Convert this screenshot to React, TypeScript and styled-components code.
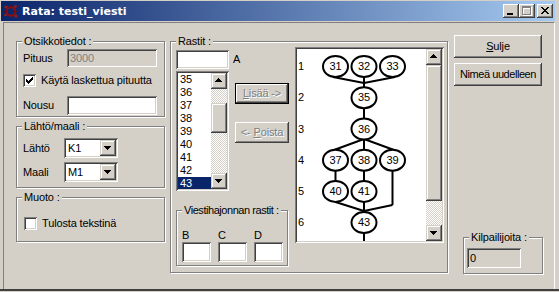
import React from 'react';
import styled, { createGlobalStyle, css } from 'styled-components';

const FACE = '#D4D0C8';
const SHADOW = '#808080';
const DARK = '#404040';
const NAVY = '#0A246A';

const GlobalStyle = createGlobalStyle`
  html, body {
    margin: 0;
    padding: 0;
    background: ${FACE};
    overflow: hidden;
  }
  body {
    font-family: "Liberation Sans", Arial, sans-serif;
    font-size: 11px;
    line-height: 13px;
    letter-spacing: -0.15px;
    color: #000;
  }
`;

// classic 3d edges
const raised = css`
  background: ${FACE};
  box-shadow: inset -1px -1px ${DARK}, inset 1px 1px #fff, inset -2px -2px ${SHADOW}, inset 2px 2px ${FACE};
`;
const raisedSmall = css`
  background: ${FACE};
  box-shadow: inset -1px -1px ${DARK}, inset 1px 1px ${FACE}, inset -2px -2px ${SHADOW}, inset 2px 2px #fff;
`;
const sunken = css`
  box-shadow: inset 1px 1px ${SHADOW}, inset -1px -1px #fff, inset 2px 2px ${DARK}, inset -2px -2px ${FACE};
`;
const dither = css`
  background: repeating-conic-gradient(#fff 0 25%, ${FACE} 0 50%) 0 0 / 2px 2px;
`;

const Window = styled.div`
  width: 559px;
  height: 292px;
  box-sizing: border-box;
  padding: 1px 4px 3px 1px;
  background: ${FACE};
  box-shadow: inset 0 -1px ${FACE}, inset 0 -3px ${DARK};
  display: flex;
  flex-direction: column;
`;

const TitleBar = styled.div`
  height: 20px;
  flex: none;
  display: flex;
  align-items: center;
  padding: 0 2px;
  background: linear-gradient(to right, ${NAVY}, #a6caf0);
`;

const TitleText = styled.span`
  flex: 1;
  margin-left: 3px;
  color: #fff;
  font-family: "DejaVu Sans", Verdana, sans-serif;
  font-weight: bold;
  font-size: 11px;
  letter-spacing: 0;
  white-space: nowrap;
`;

const CapButton = styled.div<{ $gap?: number }>`
  width: 16px;
  height: 14px;
  margin-left: ${p => p.$gap ?? 0}px;
  ${raised}
  svg {
    display: block;
  }
`;

const Client = styled.div`
  flex: 1;
  margin: 1px 0 0 2px;
  border-top: 1px solid ${SHADOW};
  border-left: 1px solid ${SHADOW};
  border-right: 1px solid #fff;
  display: flex;
  align-items: flex-start;
  padding-left: 12px;
`;

const LeftCol = styled.div`
  width: 149px;
  padding-top: 18px;
  display: flex;
  flex-direction: column;
`;

const Group = styled.div<{ $w: number; $h: number; $mt?: number; $ml?: number }>`
  box-sizing: border-box;
  width: ${p => p.$w}px;
  height: ${p => p.$h}px;
  margin-top: ${p => p.$mt ?? 0}px;
  margin-left: ${p => p.$ml ?? 0}px;
  flex: none;
  border: 1px solid ${SHADOW};
  box-shadow: inset 1px 1px #fff, 1px 1px #fff;
`;

const Caption = styled.div`
  margin: -7px 0 0 5px;
  padding: 0 2px;
  width: fit-content;
  height: 13px;
  background: ${FACE};
  white-space: nowrap;
`;

const Fields = styled.div<{ $pl: number; $pt?: number }>`
  display: flex;
  flex-direction: column;
  padding-left: ${p => p.$pl}px;
  padding-top: ${p => p.$pt ?? 0}px;
`;

const Row = styled.div<{ $h: number; $mt?: number }>`
  display: flex;
  align-items: center;
  height: ${p => p.$h}px;
  margin-top: ${p => p.$mt ?? 0}px;
`;

const Label = styled.span<{ $w: number }>`
  width: ${p => p.$w}px;
  flex: none;
`;

const Edit = styled.div<{ $w: number; $h: number; $off?: boolean; $mt?: number; $ml?: number }>`
  box-sizing: border-box;
  width: ${p => p.$w}px;
  height: ${p => p.$h}px;
  margin-top: ${p => p.$mt ?? 0}px;
  margin-left: ${p => p.$ml ?? 0}px;
  flex: none;
  padding: 2px 3px;
  display: flex;
  align-items: center;
  background: ${p => (p.$off ? FACE : '#fff')};
  ${sunken}
`;

const DimText = styled.span`
  color: ${SHADOW};
`;

const CheckBox = styled.div`
  width: 13px;
  height: 13px;
  flex: none;
  background: #fff;
  ${sunken}
  svg {
    display: block;
  }
`;

const CheckText = styled.span`
  margin-left: 5px;
  white-space: nowrap;
`;

const Combo = styled.div`
  box-sizing: border-box;
  width: 54px;
  height: 20px;
  padding: 2px;
  display: flex;
  background: #fff;
  ${sunken}
`;

const ComboText = styled.div`
  flex: 1;
  padding-left: 2px;
  line-height: 16px;
`;

const SmallButton = styled.div`
  width: 16px;
  height: 16px;
  flex: none;
  ${raisedSmall}
  svg {
    display: block;
  }
`;

const Track = styled.div<{ $h: number }>`
  height: ${p => p.$h}px;
  flex: none;
  ${dither}
`;

const Thumb = styled.div<{ $h: number }>`
  height: ${p => p.$h}px;
  flex: none;
  ${raisedSmall}
`;

const ScrollBar = styled.div`
  width: 16px;
  flex: none;
  display: flex;
  flex-direction: column;
`;

const RastitBody = styled.div`
  display: flex;
  padding-left: 5px;
`;

const Controls = styled.div`
  width: 113px;
  flex: none;
  padding-top: 2px;
  display: flex;
  flex-direction: column;
`;

const ListBox = styled.div`
  box-sizing: border-box;
  width: 53px;
  height: 120px;
  padding: 2px;
  display: flex;
  background: #fff;
  ${sunken}
`;

const ListItems = styled.div`
  flex: 1;
  overflow: hidden;
`;

const ListItem = styled.div<{ $selected?: boolean }>`
  height: 13px;
  line-height: 13px;
  padding-left: 2px;
  background: ${p => (p.$selected ? NAVY : 'transparent')};
  color: ${p => (p.$selected ? '#fff' : '#000')};
`;

const ButtonCol = styled.div`
  margin-left: 6px;
  display: flex;
  flex-direction: column;
`;

const PushButton = styled.div<{ $w: number; $h: number; $mt?: number; $default?: boolean; $disabled?: boolean }>`
  box-sizing: border-box;
  width: ${p => p.$w}px;
  height: ${p => p.$h}px;
  margin-top: ${p => p.$mt ?? 0}px;
  flex: none;
  display: flex;
  align-items: center;
  justify-content: center;
  white-space: nowrap;
  ${raised}
  ${p =>
    p.$default &&
    css`
      box-shadow: inset 0 0 0 1px #000, inset -2px -2px ${DARK}, inset 2px 2px #fff, inset -3px -3px ${SHADOW};
    `}
  ${p =>
    p.$disabled &&
    css`
      color: ${SHADOW};
      text-shadow: 1px 1px #fff;
    `}
`;

const WideText = styled.span`
  letter-spacing: -0.45px;
`;

const HajontaGrid = styled.div<{ $mt?: number }>`
  display: grid;
  grid-template-columns: repeat(3, 29px);
  column-gap: 7px;
  padding-left: 5px;
  margin-top: ${p => p.$mt ?? 0}px;
`;

const DiagramBox = styled.div`
  box-sizing: border-box;
  width: 149px;
  height: 196px;
  margin: -1px 0 0 6px;
  padding: 2px;
  display: flex;
  background: #fff;
  ${sunken}
  svg.diagram {
    display: block;
    flex: none;
  }
`;

const RightCol = styled.div`
  width: 89px;
  margin-left: 6px;
  padding-top: 12px;
  display: flex;
  flex-direction: column;
`;

const ArrowDown = () => (
  <svg width="16" height="16" shapeRendering="crispEdges">
    <path transform="translate(4 6)" d="M0 0h7v1H0z M1 1h5v1H1z M2 2h3v1H2z M3 3h1v1H3z" fill="#000" />
  </svg>
);

const ArrowUp = () => (
  <svg width="16" height="16" shapeRendering="crispEdges">
    <path transform="translate(4 5)" d="M3 0h1v1H3z M2 1h3v1H2z M1 2h5v1H1z M0 3h7v1H0z" fill="#000" />
  </svg>
);

const Check = ({ on }: { on?: boolean }) => (
  <CheckBox>
    {on && (
      <svg width="13" height="13" shapeRendering="crispEdges">
        <path
          d="M9 3h1v1H9z M8 4h2v1H8z M3 5h1v1H3z M7 5h3v1H7z M3 6h2v1H3z M6 6h3v1H6z M3 7h5v1H3z M4 8h3v1H4z M5 9h1v1H5z"
          fill="#000"
        />
      </svg>
    )}
  </CheckBox>
);

const VScroll = ({ parts }: { parts: [number, number, number] }) => (
  <ScrollBar>
    <SmallButton>
      <ArrowUp />
    </SmallButton>
    <Track $h={parts[0]} />
    <Thumb $h={parts[1]} />
    <Track $h={parts[2]} />
    <SmallButton>
      <ArrowDown />
    </SmallButton>
  </ScrollBar>
);

const AppIcon = () => (
  <svg width="16" height="16" viewBox="0 0 16 16">
    <circle cx="8" cy="8.5" r="4.2" fill="none" stroke="#8b1010" strokeWidth="2" />
    <circle cx="3" cy="4" r="1.6" fill="#a01818" />
    <circle cx="12.5" cy="3.5" r="1.4" fill="#a01818" />
    <circle cx="2.5" cy="12" r="1.3" fill="#a01818" />
    <circle cx="13" cy="13" r="1.6" fill="#a01818" />
    <path d="M8 4.3 L8 1.5 M11.8 8.5 L15 8.5 M4.2 8.5 L1 8.5" stroke="#6a0a0a" strokeWidth="1.2" />
  </svg>
);

const Diagram = () => {
  const cols = [38.5, 67, 95.5];
  const rowY = [17.5, 48.7, 80, 111.2, 142.4, 173.6];
  const nodes: [string, number, number][] = [
    ['31', cols[0], rowY[0]],
    ['32', cols[1], rowY[0]],
    ['33', cols[2], rowY[0]],
    ['35', cols[1], rowY[1]],
    ['36', cols[1], rowY[2]],
    ['37', cols[0], rowY[3]],
    ['38', cols[1], rowY[3]],
    ['39', cols[2], rowY[3]],
    ['40', cols[0], rowY[4]],
    ['41', cols[1], rowY[4]],
    ['43', cols[1], rowY[5]],
  ];
  const lines = [
    'M36 28 L67 34',
    'M98 28 L67 34',
    'M67 28 L67 38',
    'M67 59 L67 70',
    'M67 90 L37 101',
    'M67 90 L97 101',
    'M67 90 L67 101',
    'M38.5 122 L38.5 132',
    'M67 122 L67 132',
    'M95.5 122 L95.5 156',
    'M38.5 153 L67 162',
    'M95.5 156 L67 162',
    'M67 153 L67 164',
    'M67 184 L67 192',
  ];
  return (
    <svg className="diagram" width="129" height="192" fontFamily="Liberation Sans, Arial, sans-serif" fontSize="11">
      {rowY.map((y, i) => (
        <text key={i} x="1" y={y + 3.5}>
          {i + 1}
        </text>
      ))}
      {lines.map(d => (
        <path key={d} d={d} stroke="#000" strokeWidth="2" fill="none" />
      ))}
      {nodes.map(([n, x, y]) => (
        <g key={n}>
          <ellipse cx={x} cy={y} rx="12.5" ry="10.5" fill="#fff" stroke="#000" strokeWidth="2" />
          <text x={x} y={y + 3.5} textAnchor="middle">
            {n}
          </text>
        </g>
      ))}
    </svg>
  );
};

const App: React.FC = () => {
  const rastit = ['35', '36', '37', '38', '39', '40', '41', '42', '43'];
  return (
    <>
      <GlobalStyle />
      <Window>
        <TitleBar>
          <AppIcon />
          <TitleText>Rata: testi_viesti</TitleText>
          <CapButton>
            <svg width="16" height="14" shapeRendering="crispEdges">
              <rect x="4" y="9" width="6" height="2" fill="#000" />
            </svg>
          </CapButton>
          <CapButton>
            <svg width="16" height="14" shapeRendering="crispEdges">
              <path transform="translate(1 1)" d="M3 2h9v2H3z M3 4h1v7H3z M11 4h1v7h-1z M3 10h9v1H3z" fill="#fff" />
              <path d="M3 2h9v2H3z M3 4h1v7H3z M11 4h1v7h-1z M3 10h9v1H3z" fill={SHADOW} />
            </svg>
          </CapButton>
          <CapButton $gap={2}>
            <svg width="16" height="14" shapeRendering="crispEdges">
              <path
                d="M4 3h2v1H4z M10 3h2v1h-2z M5 4h2v1H5z M9 4h2v1H9z M6 5h4v1H6z M7 6h2v1H7z M6 7h4v1H6z M5 8h2v1H5z M9 8h2v1H9z M4 9h2v1H4z M10 9h2v1h-2z"
                fill="#000"
              />
            </svg>
          </CapButton>
        </TitleBar>

        <Client>
          <LeftCol>
            <Group $w={149} $h={76}>
              <Caption>Otsikkotiedot :</Caption>
              <Fields $pl={6} $pt={1}>
                <Row $h={18}>
                  <Label $w={44}>Pituus</Label>
                  <Edit $w={90} $h={18} $off>
                    <DimText>3000</DimText>
                  </Edit>
                </Row>
                <Row $h={16} $mt={5}>
                  <Check on />
                  <CheckText>Käytä laskettua pituutta</CheckText>
                </Row>
                <Row $h={19} $mt={8}>
                  <Label $w={44}>Nousu</Label>
                  <Edit $w={90} $h={19} />
                </Row>
              </Fields>
            </Group>

            <Group $w={149} $h={62} $mt={9}>
              <Caption>Lähtö/maali :</Caption>
              <Fields $pl={6} $pt={5}>
                <Row $h={20}>
                  <Label $w={41}>Lähtö</Label>
                  <Combo>
                    <ComboText>K1</ComboText>
                    <SmallButton>
                      <ArrowDown />
                    </SmallButton>
                  </Combo>
                </Row>
                <Row $h={20} $mt={4}>
                  <Label $w={41}>Maali</Label>
                  <Combo>
                    <ComboText>M1</ComboText>
                    <SmallButton>
                      <ArrowDown />
                    </SmallButton>
                  </Combo>
                </Row>
              </Fields>
            </Group>

            <Group $w={149} $h={45} $mt={9}>
              <Caption>Muoto :</Caption>
              <Fields $pl={7} $pt={11}>
                <Row $h={16}>
                  <Check />
                  <CheckText>Tulosta tekstinä</CheckText>
                </Row>
              </Fields>
            </Group>
          </LeftCol>

          <Group $w={278} $h={232} $mt={18} $ml={5}>
            <Caption>Rastit :</Caption>
            <RastitBody>
              <Controls>
                <Row $h={19}>
                  <Edit $w={53} $h={19} />
                  <Label $w={10} style={{ marginLeft: 4 }}>
                    A
                  </Label>
                </Row>
                <Row $h={120} $mt={2} style={{ alignItems: 'flex-start' }}>
                  <ListBox>
                    <ListItems>
                      {rastit.map(r => (
                        <ListItem key={r} $selected={r === '43'}>
                          {r}
                        </ListItem>
                      ))}
                    </ListItems>
                    <VScroll parts={[14, 30, 40]} />
                  </ListBox>
                  <ButtonCol>
                    <PushButton $w={54} $h={21} $mt={12} $default $disabled>
                      <span>
                        <u>L</u>isää -&gt;
                      </span>
                    </PushButton>
                    <PushButton $w={54} $h={21} $mt={18} $disabled>
                      <span>
                        &lt;- <u>P</u>oista
                      </span>
                    </PushButton>
                  </ButtonCol>
                </Row>
                <Group $w={112} $h={56} $mt={19}>
                  <Caption>
                    <WideText>Viestihajonnan rastit :</WideText>
                  </Caption>
                  <HajontaGrid $mt={12}>
                    <span>B</span>
                    <span>C</span>
                    <span>D</span>
                  </HajontaGrid>
                  <HajontaGrid>
                    <Edit $w={29} $h={20} />
                    <Edit $w={29} $h={20} />
                    <Edit $w={29} $h={20} />
                  </HajontaGrid>
                </Group>
              </Controls>
              <DiagramBox>
                <Diagram />
                <VScroll parts={[0, 136, 24]} />
              </DiagramBox>
            </RastitBody>
          </Group>

          <RightCol>
            <PushButton $w={88} $h={23}>
              <span>
                <u>S</u>ulje
              </span>
            </PushButton>
            <PushButton $w={88} $h={23} $mt={5}>
              <WideText>Nimeä uudelleen</WideText>
            </PushButton>
            <Group $w={80} $h={37} $mt={151} $ml={9}>
              <Caption>Kilpailijoita :</Caption>
              <Edit $w={54} $h={20} $off $mt={4} $ml={3}>
                0
              </Edit>
            </Group>
          </RightCol>
        </Client>
      </Window>
    </>
  );
};

export default App;
